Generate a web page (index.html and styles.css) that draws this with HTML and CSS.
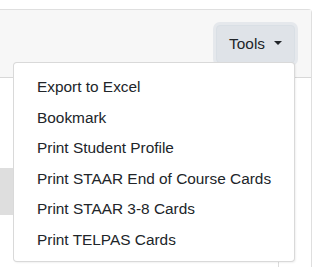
FILE: index.html
```html
<!DOCTYPE html>
<html lang="en">
<head>
    <meta charset="UTF-8">
    <meta name="viewport" content="width=device-width, initial-scale=1.0">
    <title>Student Tools</title>
    <link rel="stylesheet" href="styles.css">
</head>
<body>

    <div class="card">
        <!-- Header with the tools dropdown -->
        <div class="card-header">
            <div class="dropdown">
                <button class="btn btn-light dropdown-toggle" type="button">Tools</button>
                <div class="dropdown-menu">
                    <a class="dropdown-item" href="#">Export to Excel</a>
                    <a class="dropdown-item" href="#">Bookmark</a>
                    <a class="dropdown-item" href="#">Print Student Profile</a>
                    <a class="dropdown-item" href="#">Print STAAR End of Course Cards</a>
                    <a class="dropdown-item" href="#">Print STAAR 3-8 Cards</a>
                    <a class="dropdown-item" href="#">Print TELPAS Cards</a>
                </div>
            </div>
        </div>

        <!-- Body (mostly hidden behind the menu) -->
        <div class="card-body">
            <div class="well"></div>
            <div class="table-col"></div>
        </div>
    </div>

</body>
</html>
```

FILE: styles.css
```css
body {
    font-family: 'Liberation Sans', Arial, sans-serif;
    font-size: 15.4px;
    color: #212529;
    background-color: #fff;
    margin: 0;
    overflow: hidden;
}

.card {
    margin: 9px 1px 0 -10px;
    border: 1px solid rgba(0, 0, 0, 0.125);
    border-radius: 4px;
    background-color: #fff;
    height: 300px;
}

.card-header {
    display: flex;
    justify-content: flex-end;
    padding: 15px 16px 14px;
    background-color: #f7f7f7;
    border-bottom: 1px solid rgba(0, 0, 0, 0.125);
}

.dropdown {
    position: relative;
}

.btn {
    font-family: inherit;
    font-size: 15.4px;
    line-height: 24px;
    padding: 6px 12px 6px 12px;
    border-radius: 4px;
    cursor: pointer;
}

.btn-light {
    color: #212529;
    background-color: #dfe3e8;
    border: 1px solid #d9dfe5;
    box-shadow: 0 0 0 3px rgba(216, 222, 228, 0.6);
}

.dropdown-toggle::after {
    display: inline-block;
    margin-left: 9px;
    vertical-align: 4px;
    content: "";
    border-top: 4.5px solid #212529;
    border-right: 4.5px solid transparent;
    border-left: 4.5px solid transparent;
}

.dropdown-menu {
    position: absolute;
    top: 37px;
    right: 0;
    width: 282px;
    box-sizing: border-box;
    padding: 9px 0 6px;
    background-color: #fff;
    border: 1px solid rgba(0, 0, 0, 0.15);
    border-radius: 4px;
    box-shadow: 1px 1px 2px rgba(0, 0, 0, 0.06);
    z-index: 10;
}

.dropdown-item {
    display: block;
    padding: 3.25px 23px;
    line-height: 24px;
    color: #212529;
    text-decoration: none;
    white-space: nowrap;
}

.card-body {
    position: relative;
}

.well {
    margin-top: 90px;
    width: 120px;
    height: 47px;
    background-color: #dedede;
}

.table-col {
    margin-top: 30px;
    width: 287px;
    height: 60px;
    border-right: 1px solid #dcdcdc;
}
```
